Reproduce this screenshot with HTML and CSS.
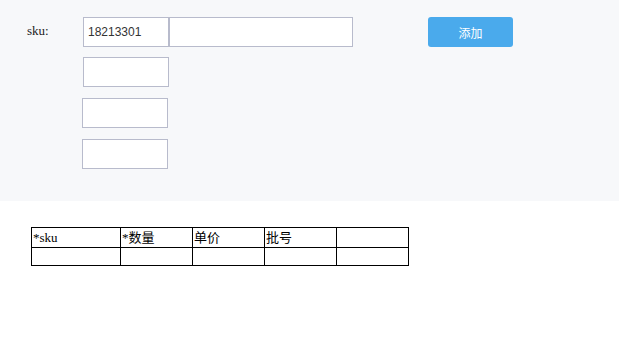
FILE: index.html
```html
<!DOCTYPE html>
<html>
<head>
<meta charset="utf-8">
<link rel="stylesheet" href="styles.css">
</head>
<body>
<div class="panel">
  <div class="row row-first">
    <label class="label">sku:</label>
    <input class="field" type="text" value="18213301">
    <input class="field field-wide" type="text">
    <button class="btn">添加</button>
  </div>
  <div class="row row-2">
    <input class="field" type="text">
  </div>
  <div class="row row-3">
    <input class="field" type="text">
  </div>
  <div class="row row-4">
    <input class="field" type="text">
  </div>
</div>
<table class="grid">
  <colgroup>
    <col class="c1"><col class="c"><col class="c"><col class="c"><col class="c">
  </colgroup>
  <tr class="head">
    <td>*sku</td><td>*数量</td><td>单价</td><td>批号</td><td></td>
  </tr>
  <tr class="body">
    <td></td><td></td><td></td><td></td><td></td>
  </tr>
</table>
</body>
</html>
```
FILE: styles.css
```css
html, body {
  margin: 0;
  padding: 0;
  background: #ffffff;
}
body {
  font-family: "Liberation Serif", "Noto Sans CJK SC", serif;
}
.panel {
  background: #f7f8fa;
  height: 201px;
  box-sizing: border-box;
  padding-top: 17px;
  display: flex;
  flex-direction: column;
}
.row {
  display: flex;
  align-items: center;
  height: 30px;
}
.row-first {
  padding-left: 27px;
}
.row-2 { margin-top: 10px; padding-left: 83px; }
.row-3 { margin-top: 11px; padding-left: 82px; }
.row-4 { margin-top: 11px; padding-left: 82px; }
.label {
  width: 56px;
  font-family: "Liberation Serif", serif;
  font-size: 13px;
  color: #222;
  position: relative;
  top: -1px;
}
.field {
  box-sizing: border-box;
  width: 86px;
  height: 30px;
  margin: 0;
  border: 1px solid #b8bbcc;
  background: #fff;
  padding: 0 4px;
  font-family: "Liberation Sans", "Noto Sans CJK SC", sans-serif;
  font-size: 12px;
  color: #333;
  outline: none;
}
.field-wide {
  width: 184px;
}
.btn {
  margin-left: 75px;
  width: 85px;
  height: 30px;
  border: none;
  border-radius: 3px;
  background: #4aaaec;
  color: #fff;
  font-family: "Noto Sans CJK SC", sans-serif;
  font-size: 12px;
  padding: 0;
}
.grid {
  margin: 26px 0 0 31px;
  border-collapse: collapse;
  table-layout: fixed;
  width: 378px;
  font-family: "Liberation Serif", "Noto Sans CJK SC", serif;
  font-size: 13px;
  color: #000;
}
.c1 { width: 89px; }
.c { width: 72px; }
.grid td {
  border: 1px solid #000;
  padding: 0 1px;
  vertical-align: middle;
  line-height: 17px;
}
.head td { height: 19px; }
.body td { height: 17px; }
```
